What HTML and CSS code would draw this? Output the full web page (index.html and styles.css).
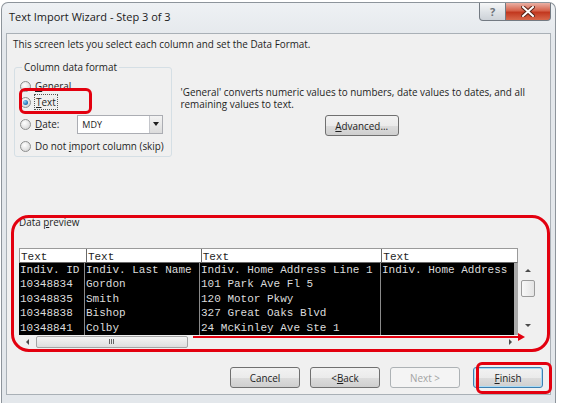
FILE: index.html
```html
<!DOCTYPE html>
<html>
<head>
    <meta charset="utf-8">
    <title>Text Import Wizard - Step 3 of 3</title>
    <link rel="stylesheet" href="styles.css">
</head>
<body>
    <div class="window">
        <div class="titlebar">
            <span class="title">Text Import Wizard - Step 3 of 3</span>
            <div class="caption-buttons">
                <span class="cap-btn cap-help">?</span>
                <span class="cap-btn cap-close">
                    <svg width="14" height="11" viewBox="0 0 14 11">
                        <path d="M2 1 L12 10 M12 1 L2 10" stroke="#5a2418" stroke-width="4" stroke-linecap="square"/>
                        <path d="M2 1 L12 10 M12 1 L2 10" stroke="#ffffff" stroke-width="2" stroke-linecap="square"/>
                    </svg>
                </span>
            </div>
        </div>

        <div class="client">
            <p class="intro">This screen lets you select each column and set the Data Format.</p>

            <div class="format-row">
                <fieldset class="group">
                    <legend>Column data format</legend>
                    <div class="option"><span class="radio"></span><span><u>G</u>eneral</span></div>
                    <div class="option"><span class="radio checked"></span><span class="focus"><u>T</u>ext</span></div>
                    <div class="option option-date">
                        <span class="radio"></span><span><u>D</u>ate:</span>
                        <span class="select">MDY<span class="drop"></span></span>
                    </div>
                    <div class="option"><span class="radio"></span><span>Do not <u>i</u>mport column (skip)</span></div>
                </fieldset>

                <div class="format-info">
                    <p>'General' converts numeric values to numbers, date values to dates, and all remaining values to text.</p>
                    <span class="btn btn-advanced"><u>A</u>dvanced...</span>
                </div>
            </div>

            <div class="preview">
                <div class="preview-label">Data <u>p</u>review</div>
                <div class="preview-box">
                    <div class="grid-area">
                        <div class="grid-head">
                            <span class="col c1">Text</span>
                            <span class="col c2">Text</span>
                            <span class="col c3">Text</span>
                            <span class="col c4">Text</span>
                        </div>
                        <div class="grid-body">
                            <span class="cell">Indiv. ID</span><span class="cell">Indiv. Last Name</span><span class="cell">Indiv. Home Address Line 1</span><span class="cell">Indiv. Home Address Line 2</span>
                            <span class="cell">10348834</span><span class="cell">Gordon</span><span class="cell">101 Park Ave Fl 5</span><span class="cell"></span>
                            <span class="cell">10348835</span><span class="cell">Smith</span><span class="cell">120 Motor Pkwy</span><span class="cell"></span>
                            <span class="cell">10348838</span><span class="cell">Bishop</span><span class="cell">327 Great Oaks Blvd</span><span class="cell"></span>
                            <span class="cell">10348841</span><span class="cell">Colby</span><span class="cell">24 McKinley Ave Ste 1</span><span class="cell"></span>
                        </div>
                    </div>
                    <div class="vscroll">
                        <span class="arrow arrow-up"></span>
                        <span class="vthumb"></span>
                        <span class="arrow arrow-down"></span>
                    </div>
                    <div class="hscroll">
                        <span class="arrow arrow-left"></span>
                        <span class="hthumb"><span class="grip"></span></span>
                        <span class="arrow arrow-right"></span>
                    </div>
                </div>
            </div>

            <div class="buttons">
                <span class="btn">Cancel</span>
                <span class="btn">&lt; <u>B</u>ack</span>
                <span class="btn btn-disabled">Next &gt;</span>
                <span class="btn btn-default"><u>F</u>inish</span>
            </div>

            <!-- red callouts drawn over the dialog -->
            <div class="callout callout-text"></div>
            <div class="callout callout-preview"></div>
            <div class="callout callout-finish"></div>
            <div class="callout-arrow"></div>
        </div>
    </div>
</body>
</html>
```

FILE: styles.css
```css
body {
    margin: 0;
    background: #ffffff;
    font-family: "Open Sans", "Noto Sans", sans-serif;
    font-size: 9.9px;
    color: #1e1e1e;
}

u {
    text-decoration: underline;
    text-underline-offset: 1px;
}

.window {
    margin: 2px 0 0 1px;
    width: 555px;
    height: 401px;
    border: 1px solid #8d949b;
    border-bottom: none;
    border-radius: 7px 7px 0 0;
    background: linear-gradient(#eef1f4, #e3e7eb 40px, #e3e7eb);
    box-sizing: border-box;
    display: flex;
    flex-direction: column;
}

.titlebar {
    height: 30px;
    display: flex;
    justify-content: space-between;
    align-items: flex-start;
    padding-left: 7px;
}

.title {
    font-size: 11px;
    margin-top: 6px;
    color: #1a1a1a;
}

.caption-buttons {
    display: flex;
    margin-right: 4px;
}

.cap-btn {
    height: 18px;
    box-sizing: border-box;
    display: flex;
    align-items: center;
    justify-content: center;
    border: 1px solid #737a82;
    border-top: none;
}

.cap-help {
    width: 27px;
    border-radius: 0 0 0 4px;
    background: linear-gradient(#f6f7f8, #dde1e5 55%, #cdd2d8);
    color: #6d7379;
    font-weight: 700;
    font-size: 11px;
}

.cap-close {
    width: 45px;
    border-left: none;
    border-radius: 0 0 4px 0;
    background: linear-gradient(#eab0a4, #d6624b 45%, #c2381f 55%, #d8674a);
}

.client {
    position: relative;
    margin: 0 4px 0 4px;
    height: 362px;
    border: 1px solid #a9b0b6;
    background: #f0f0f0;
    box-sizing: border-box;
    padding: 4px 7px 0 6px;
}

.intro {
    margin: 0;
    line-height: 13px;
}

.format-row {
    display: flex;
    margin-top: 9px;
}

.group {
    margin: 0 0 0 1px;
    width: 159px;
    height: 97px;
    box-sizing: border-box;
    border: 1px solid #d5dfe5;
    border-radius: 3px;
    padding: 4px 0 0 5px;
}

.group legend {
    padding: 0 2px;
    margin-left: 2px;
}

.option {
    display: flex;
    align-items: center;
    height: 16px;
    gap: 4px;
}

.option-date {
    height: 22px;
    margin-top: 3px;
    margin-bottom: 3px;
}

.radio {
    width: 11px;
    height: 11px;
    box-sizing: border-box;
    border-radius: 50%;
    border: 1px solid #8e8f8f;
    background: radial-gradient(circle at 40% 35%, #ffffff, #dcdcdc 70%, #c9c9c9);
    display: flex;
    align-items: center;
    justify-content: center;
}

.radio.checked::after {
    content: "";
    width: 5px;
    height: 5px;
    border-radius: 50%;
    background: radial-gradient(circle at 35% 35%, #8fd2f8, #1d6ab0 70%);
}

.focus {
    outline: 1px dotted #555555;
    padding: 0 1px;
}

.select {
    margin-left: 14px;
    width: 86px;
    height: 19px;
    box-sizing: border-box;
    border: 1px solid #abadb3;
    background: #ffffff;
    display: flex;
    align-items: center;
    justify-content: space-between;
    padding-left: 4px;
    font-size: 9px;
}

.drop {
    width: 13px;
    height: 17px;
    box-sizing: border-box;
    border-left: 1px solid #c4c6cb;
    background: linear-gradient(#f3f3f3, #dcdcdc);
    display: flex;
    align-items: center;
    justify-content: center;
}

.drop::after {
    content: "";
    border-left: 3px solid transparent;
    border-right: 3px solid transparent;
    border-top: 4px solid #1e1e1e;
}

.format-info {
    margin-left: 9px;
    margin-top: 26px;
    width: 366px;
    display: flex;
    flex-direction: column;
    align-items: center;
}

.format-info p {
    margin: 0;
    line-height: 12px;
    align-self: flex-start;
}

.btn {
    width: 70px;
    height: 21px;
    box-sizing: border-box;
    border: 1px solid #707070;
    border-radius: 3px;
    background: linear-gradient(#f2f2f2, #ebebeb 50%, #dddddd 51%, #cfcfcf);
    display: flex;
    align-items: center;
    justify-content: center;
    color: #1e1e1e;
}

.btn-advanced {
    width: 74px;
    margin-top: 5px;
}

.btn-disabled {
    color: #a3a3a3;
    border-color: #adb2b5;
    background: #f4f4f4;
}

.btn-default {
    border-color: #3c7fb1;
    box-shadow: inset 0 0 0 1px #a9dbf6;
}

.preview {
    margin-top: 59px;
    padding-left: 6px;
}

.preview-label {
    line-height: 13px;
}

.preview-box {
    margin-top: 19px;
    display: grid;
    grid-template-columns: 499px 20px;
    grid-template-rows: 87px 13px;
}

.grid-area {
    display: flex;
    flex-direction: column;
    font-family: "Liberation Mono", "DejaVu Sans Mono", monospace;
    font-size: 11px;
}

.grid-head {
    display: flex;
    height: 15px;
    background: #ffffff;
    border: 1px solid #9a9a9a;
    border-bottom: 1px solid #6a6a6a;
    box-sizing: border-box;
    line-height: 16px;
}

.col {
    box-sizing: border-box;
    border-left: 1px solid #6a6a6a;
    height: 13px;
    padding-left: 1px;
}

.col.c1 { width: 66px; border-left: none; }
.col.c2 { width: 115px; }
.col.c3 { width: 181px; }
.col.c4 { width: 136px; }

.grid-body {
    display: grid;
    grid-template-columns: 66px 115px 181px 133px;
    grid-auto-rows: 14.4px;
    background: #000000;
    color: #dcdcdc;
    border-right: 4px solid #a9a9a9;
    line-height: 14px;
    height: 72px;
}

.cell {
    white-space: nowrap;
    overflow: hidden;
    border-right: 1px solid #8a8a8a;
    padding-left: 1px;
}

.cell:nth-child(4n) {
    border-right: none;
}

/* scroll arrows are small css triangles */
.arrow {
    width: 0;
    height: 0;
}

.arrow-up {
    margin-top: 6px;
    border-left: 3px solid transparent;
    border-right: 3px solid transparent;
    border-bottom: 3px solid #4b4b4b;
}

.arrow-down {
    margin-bottom: 8px;
    border-left: 3px solid transparent;
    border-right: 3px solid transparent;
    border-top: 3px solid #4b4b4b;
}

.arrow-left {
    border-top: 3px solid transparent;
    border-bottom: 3px solid transparent;
    border-right: 3px solid #4b4b4b;
}

.arrow-right {
    margin-left: auto;
    margin-right: 6px;
    border-top: 3px solid transparent;
    border-bottom: 3px solid transparent;
    border-left: 3px solid #4b4b4b;
}

.vscroll {
    margin-top: 15px;
    display: flex;
    flex-direction: column;
    align-items: center;
}

.vthumb {
    width: 14px;
    height: 17px;
    margin-top: 8px;
    margin-bottom: auto;
    box-sizing: border-box;
    border: 1px solid #9a9a9a;
    border-radius: 2px;
    background: linear-gradient(90deg, #f8f8f8, #e4e4e4);
}

.hscroll {
    display: flex;
    align-items: center;
    padding-left: 7px;
}

.hthumb {
    width: 152px;
    height: 12px;
    margin-left: 7px;
    box-sizing: border-box;
    border: 1px solid #a4a4a4;
    border-radius: 2px;
    background: linear-gradient(#f4f4f4, #dedede);
    display: flex;
    align-items: center;
    justify-content: center;
}

.grip {
    width: 6px;
    height: 5px;
    background: repeating-linear-gradient(90deg, #666666 0 1px, transparent 1px 2px);
}

.buttons {
    display: flex;
    justify-content: flex-end;
    gap: 10px;
    margin-top: 19px;
}

.buttons .btn-default {
    margin-left: 3px;
}

.callout {
    position: absolute;
    border: 3px solid #e3000f;
    box-sizing: border-box;
}

.callout-text {
    left: 12px;
    top: 54px;
    width: 73px;
    height: 26px;
    border-radius: 6px;
}

.callout-preview {
    left: 4px;
    top: 181px;
    width: 539px;
    height: 137px;
    border-radius: 18px;
}

.callout-finish {
    left: 469px;
    top: 328px;
    width: 76px;
    height: 32px;
    border-radius: 6px;
}

.callout-arrow {
    position: absolute;
    left: 186px;
    top: 302px;
    width: 326px;
    height: 2px;
    background: #e3000f;
}

.callout-arrow::after {
    content: "";
    position: absolute;
    right: -6px;
    top: -3px;
    border-top: 4px solid transparent;
    border-bottom: 4px solid transparent;
    border-left: 7px solid #e3000f;
}
```
